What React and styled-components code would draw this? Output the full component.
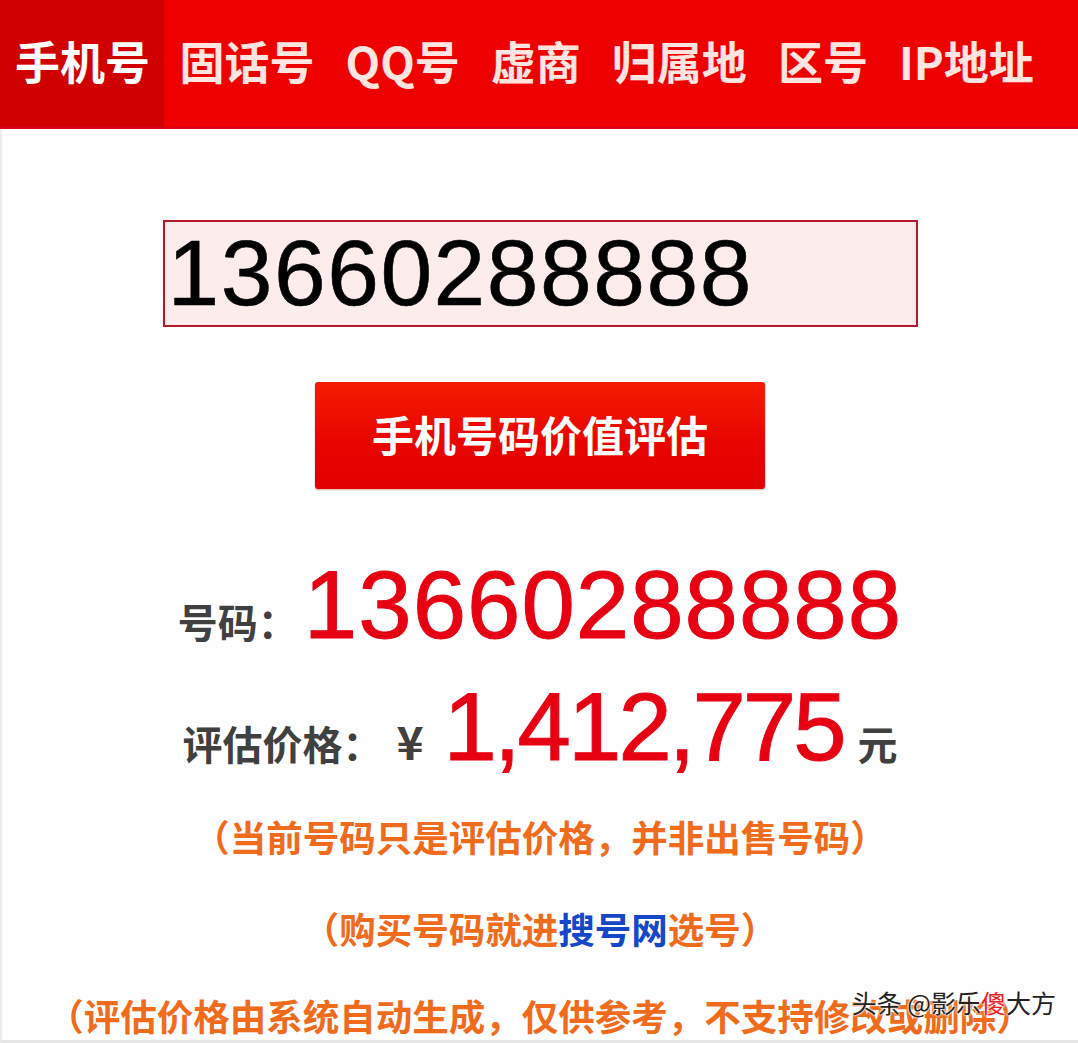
import React from "react";
import styled, { createGlobalStyle } from "styled-components";

const GlobalStyle = createGlobalStyle`
  html, body {
    margin: 0;
    padding: 0;
    background: #ffffff;
  }
  body {
    font-family: "Noto Sans CJK SC", "Noto Sans", sans-serif;
  }
`;

const CJK = `"Noto Sans CJK SC", "Noto Sans", sans-serif`;
const LATIN = `"Liberation Sans", Arial, "Noto Sans CJK SC", sans-serif`;

const Page = styled.div`
  position: relative;
  width: 1078px;
  height: 1043px;
  overflow: hidden;
  display: flex;
  flex-direction: column;
`;

const TabBar = styled.nav`
  height: 127px;
  flex: 0 0 auto;
  display: flex;
  align-items: stretch;
  background: #ee0000;
  border-bottom: 2px solid #d7001c;
`;

const Tab = styled.div`
  display: flex;
  align-items: center;
  padding-left: ${(p) => (p.$first ? "15px" : "15.5px")};
  padding-right: ${(p) => (p.$first ? "14px" : "15.5px")};
  padding-bottom: 6px;
  background: ${(p) => (p.$active ? "#d00000" : "transparent")};
  color: ${(p) => (p.$active ? "#ffffff" : "#ffe4e0")};
  font-family: ${CJK};
  font-weight: 700;
  font-size: 45px;
  line-height: 1;
  white-space: nowrap;
`;

const Main = styled.main`
  flex: 1 1 auto;
  display: flex;
  flex-direction: column;
  align-items: center;
  padding-top: 91px;
  border-left: 2px solid #ececec;
  border-bottom: 3px solid #e6e6e6;
  background: #fffefe;
`;

const NumberInput = styled.div`
  box-sizing: border-box;
  width: 755px;
  height: 107px;
  display: flex;
  align-items: center;
  padding-left: 3px;
  border: 2px solid #b3172a;
  background: #fdecec;
  color: #000000;
  font-family: ${LATIN};
  font-size: 93px;
  line-height: 1;
  letter-spacing: 1.5px;
  -webkit-text-stroke: 0.6px #000000;
`;

const EvalButton = styled.button`
  box-sizing: border-box;
  margin-top: 55px;
  width: 450px;
  height: 107px;
  border: none;
  border-radius: 3px;
  background: linear-gradient(180deg, #f41c00 0%, #e80500 55%, #e20000 100%);
  box-shadow: 0 1px 2px rgba(120, 0, 0, 0.35);
  color: #ffffff;
  font-family: ${CJK};
  font-weight: 700;
  font-size: 42px;
  line-height: 1;
  padding: 0 0 4px 0;
  cursor: pointer;
`;

const ResultRow = styled.div`
  display: flex;
  align-items: baseline;
  margin-top: ${(p) => p.$top}px;
`;

const Label = styled.span`
  font-family: ${CJK};
  font-weight: 700;
  font-size: 40px;
  line-height: 1;
  color: #404040;
  margin-right: ${(p) => p.$gap || 0}px;
`;

const Currency = styled.span`
  font-family: ${CJK};
  font-weight: 700;
  font-size: 46px;
  line-height: 1;
  color: #404040;
  margin-left: 14px;
  margin-right: 20px;
`;

const BigRed = styled.span`
  font-family: ${LATIN};
  font-size: 96px;
  line-height: 1;
  color: #e60012;
  letter-spacing: ${(p) => p.$spacing || 0}px;
  -webkit-text-stroke: 1px #e60012;
`;

const Unit = styled.span`
  font-family: ${CJK};
  font-weight: 700;
  font-size: 40px;
  line-height: 1;
  color: #404040;
  margin-left: 14px;
`;

const Note = styled.p`
  margin: ${(p) => p.$top}px 0 0 0;
  font-family: ${CJK};
  font-weight: 700;
  font-size: 36.5px;
  line-height: 1;
  color: #f06b1c;
  white-space: nowrap;
`;

const Link = styled.span`
  color: #1448c8;
`;

const Watermark = styled.div`
  position: absolute;
  right: 22px;
  bottom: 28px;
  font-family: ${CJK};
  font-size: 25px;
  line-height: 1;
  color: #222222;
  text-shadow: 0 0 2px #ffffff, 0 0 2px #ffffff, 0 0 3px #ffffff;
  white-space: nowrap;
`;

const WaterRed = styled.span`
  color: #ee1c1c;
`;

const tabs = ["手机号", "固话号", "QQ号", "虚商", "归属地", "区号", "IP地址"];

export default function App() {
  return (
    <>
      <GlobalStyle />
      <Page>
        <TabBar>
          {tabs.map((t, i) => (
            <Tab key={t} $active={i === 0} $first={i === 0}>
              {t}
            </Tab>
          ))}
        </TabBar>
        <Main>
          <NumberInput>13660288888</NumberInput>
          <EvalButton>手机号码价值评估</EvalButton>
          <ResultRow $top={68}>
            <Label $gap={6}>号码：</Label>
            <BigRed $spacing={1}>13660288888</BigRed>
          </ResultRow>
          <ResultRow $top={26}>
            <Label>评估价格：</Label>
            <Currency>¥</Currency>
            <BigRed $spacing={-3}>1,412,775</BigRed>
            <Unit>元</Unit>
          </ResultRow>
          <Note $top={44}>（当前号码只是评估价格，并非出售号码）</Note>
          <Note $top={55}>
            （购买号码就进<Link>搜号网</Link>选号）
          </Note>
          <Note $top={51}>（评估价格由系统自动生成，仅供参考，不支持修改或删除）</Note>
        </Main>
        <Watermark>
          头条 @影乐<WaterRed>傻</WaterRed>大方
        </Watermark>
      </Page>
    </>
  );
}
